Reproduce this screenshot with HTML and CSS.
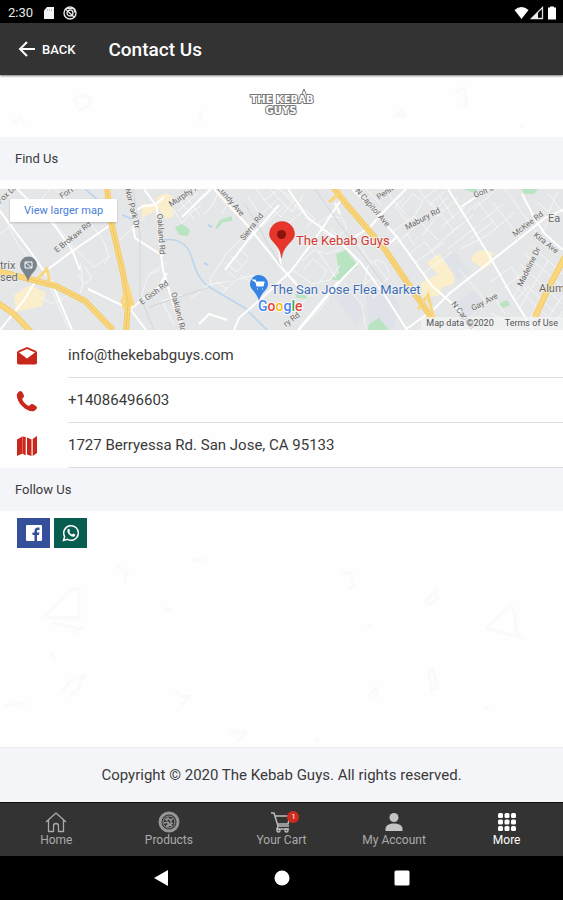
FILE: index.html
```html
<!DOCTYPE html>
<html lang="en">
<head>
  <meta charset="UTF-8">
  <title>Contact Us</title>
  <meta name="viewport" content="width=device-width, initial-scale=1.0">
  <link rel="stylesheet" href="styles.css">
</head>
<body>
  <div class="status-bar">
    <span class="status-time">2:30</span>
    <svg class="status-icon" viewBox="0 0 14 14"><path d="M5 1h7v12H2V4.500z" fill="#f4f4f4"/><path d="M5.500 3v2M7.500 3v2M9.500 3v2" stroke="#999" stroke-width=".6"/></svg>
    <svg class="status-icon" viewBox="0 0 14 14" fill="none" stroke="#e6e6e6"><circle cx="7" cy="7" r="6" stroke-width="1.400"/><circle cx="7" cy="7" r="3" stroke-width="1.300"/><path d="M2.500 3l9 8.500M4 2.500h5.500a3 3 0 0 1 2 4" stroke-width="1.200"/></svg>
    <span class="status-right">
      <svg width="15" height="14" viewBox="0 0 15 14"><path d="M.5 4Q7.500-2 14.500 4L7.500 13z" fill="#fff"/></svg>
      <svg width="14" height="14" viewBox="0 0 14 14"><path d="M1.500 12.500L12.500 1.500v11z" fill="none" stroke="#ddd" stroke-width="1.300"/><path d="M1 13L8 6v7z" fill="#eee"/></svg>
      <svg width="14" height="14" viewBox="0 0 14 14"><path d="M5 1.500h4V.5H5zM3 1.500h8v12H3z" fill="#fff"/></svg>
    </span>
  </div>

  <header class="header">
    <button class="back-btn" type="button">
      <svg width="18" height="18" viewBox="0 0 18 18" fill="none" stroke="#fff" stroke-width="2"><path d="M17 9H2.500M9 2L2 9l7 7"/></svg>
      BACK
    </button>
    <h1 class="header-title">Contact Us</h1>
  </header>

  <main class="content">
    <div class="logo">
      <svg class="doodles" viewBox="0 0 563 62" preserveAspectRatio="xMidYMid slice" aria-hidden="true">
        <path d="M74 24l8-4 9 3-3 8-8 4zM13 48l7-6 4 6M197 41l5-3-2 9M395 41l8-6 2 6zM455 17l9-4 3 16-9 2M520 52l4-3"/>
      </svg>
      <svg class="logo-art" width="70" height="28" viewBox="0 0 70 28" role="img" aria-label="The Kebab Guys">
        <text x="35" y="14">THE KEBAB</text>
        <text x="34" y="25">GUYS</text>
        <path d="M55 5l2-5 2 5"/>
      </svg>
    </div>

    <h2 class="section-title">Find Us</h2>

    <div class="map">
      <svg class="map-art" viewBox="0 0 563 141" preserveAspectRatio="xMidYMid slice">
        <rect width="563" height="141" fill="#e5e6e7"/>
        <!-- built-up blocks -->
        <g fill="#fbefcb">
          <path d="M14 106l16-10 16 8-4 13-26 6z"/>
          <path d="M157 8l9-4 7 4v20l-7 2-7-10-17 9v-14h14z"/>
          <path d="M428 72l11-7 16 22-1 8-12 3-3 9-16 1-2-14 17-9-10-9z"/>
          <path d="M472 67l8-6 13 2-2 12-8 5-12-9z"/>
        </g>
        <g fill="#dfe2e8"><path d="M365 100l22-5 14 24-9 22h-22zM442 66l14-2 14 20-13 7zM455 115l18-14 12 14-18 14zM330 103l18-4 18 24-9 14z"/></g>
        <!-- parks and water -->
        <g fill="#b9e4c2">
          <path d="M175 38l7-3 8 6-2 6-9-1z"/><path d="M215 39l5-8 12-4v5l-9 1-6 7z"/>
          <path d="M336 65l10-4 12 16-19 15-8-2 8-6z"/><path d="M464 0h14l-4 4zM521 0h17l-4 5h-9zM369 135l10-6 10 12h-21z"/>
          <path d="M499 115l8-4 3 5-7 3zM295 105l10 1 4 4-12-1z"/>
        </g>
        <g fill="none" stroke="#b8d5ef" stroke-width="1.500">
          <path d="M163 51c12-2 23 2 28 15 5 18 9 26 20 33l34 20 22 22"/>
          <path d="M85 0l14 12M122 26l10 4" /><path d="M204 74l4 2M208 36l4 2" stroke-width="2"/>
        </g>
        <!-- side streets -->
        <g class="street">
          <path d="M0 45l35-28 15-17M55 0l30 28 18 22 6 17-15 11-23-22M72 55l-22-27M109 67l-5 8M118 52l20-17M80 73l3 21-3 10M84 77l8 12-8 6-7-10M50 97l18 42M70 105l-18 10-18-10M0 20l18 36 18 22"/>
          <path d="M140 110l9-25 18-12M150 85l10-4M135 35l10-6M173 20l9 14 10-12 9-5M180 12l14 18M186 8l14 18M178 22l20-18M197 12l7-8M220 0l-8 17-8 8M232 8l-10 16M182 106l-20 6 12 24M190 110l18-14 22-4"/>
          <path d="M212 98l-2-8 17-26 14-14M222 104l14-13 18-5M216 93l11 7M226 74l11 9 11-13M231 67l12 10M238 59l10 9M229 83l7 6M240 86l14 10"/>
          <path d="M256 0l9 11 14-11M263 10l18 18 14-19M270 0l22 23 11-17M279 0l17 12M248 8l18 26M256 30l22-20M262 38l24-22M287 35l18-14 10 9-10 9M283 4l22 22"/>
          <path d="M318 34l10-7 14 2 5 11-9 8-13-3zM330 40l12 10M302 72l12-11 14 4 12-5M294 82l18 13 18-4 10-15M304 80l9-10 14 12-7 10M318 62l18 27M342 53l16 2 14 20"/>
          <path d="M368 77l8-6 9 3 5 12-8 9-10-6-8 7zM374 73l14 18M301 115l16-14M312 130l17-20M344 94l18 22 4 24M372 109l10-7"/>
          <path d="M366 0l16 17M384 0l20 24M405 8l-10 10 15 17M401 18l12-13 10 7-8 14M394 42l20-15 24 24M422 47l21-28M430 63l28-26M409 65l16-12 15 21M414 74l30-20M424 84l28-21M396 55l20-18M418 0l17 21 13-13M423 10l14-10M429 16l16-14M438 27l20-18M441 38l24-20M449 46l24-20M415 57l-8-12M448 60l28-22M439 6l15 24M432 14l22 28"/>
          <path d="M460 30l18-17 20 26M474 20l20-17M480 33l23-18M489 45l25-21M493 14l27 34M505 0l31 43M470 50l24-18M459 80l25 30M490 93l22-15 16 27M504 99l20-16M515 112l14-15M475 118l18-12 12 19M446 130l20 11M491 124l18 10"/>
          <path d="M524 64l39 34M532 57l31 28M520 75l42 40M517 87l38 37M518 100l29 27M530 130l27-50M520 118l28-46M512 110l22-38M548 4l15 20M537 52l14-24 12-8M540 141l23-35M551 141l12-19M460 60l30-15M537 13l12 10 8-20"/>
        </g>
        <!-- main roads -->
        <g class="road">
          <path d="M0 22l30 40 22 32 20 47M17 0l38 37 17 24 8 20M0 141l24-30 15-24 32-24 38-26M88 100l42 20 16 21M130 26l13-9 12-1 9-8M144 0l13 18 2 32 4 31 12 40 9 20M133 37l2 12 28 18M130 120l29-22 8-14"/>
          <path d="M214 0l34 37 32 40 18 20M182 28l29-28M234 141l5-12 23-20 29-27 24-32 28-42M225 81l23-30 31-35M281 78l-2-19M288 0l20 29 29 21 24 24 27 37 19 30M299 141l44-52 15-15M352 0l18 17 27 31 35 49 23 20 20 24M298 141l41-49"/>
          <path d="M405 141l29-21 16-16 32-25 32-25 31-25 18-8M448 0l20 32 19 31 25 44 21 34M350 51l20-13 18-20 18-18M461 18l27-18M522 5l13 25 10 15 18 16M382 61l16-14M340 25l-5-11M199 135l10-10 18 6"/>
        </g>
        <g fill="none" stroke="#d2d4d7" stroke-width="1"><path d="M133 0l7 46v61l14 34M245 15l36 62M315 0l26 37 49 66M149 118l58-19"/></g>
        <!-- freeways -->
        <g class="freeway-edge"><path d="M107-2l3 30 13 56 5 30-2 29M-2 82l31 8 27 7 29 15 28 29M-2 114l16 11 17 18M333-2l14 18 37 43 22 33 25 36M565 68l-14 26-16 34"/></g>
        <g class="freeway"><path d="M107-2l3 30 13 56 5 30-2 29M-2 82l31 8 27 7 29 15 28 29M-2 114l16 11 17 18M333-2l14 18 37 43 22 33 25 36M565 68l-14 26-16 34"/></g>
        <g fill="none" stroke="#fad77c" stroke-width="3"><path d="M122 112l6-14 5 17-9 3zM37 90l10-10 3 15M329 13l11-9 6 13M418 120l10-14 6 24"/></g>
        <g fill="none" stroke="#eec565" stroke-width="1"><path d="M107-2l3 30 13 56 5 30-2 29M333-2l14 18 37 43 22 33 25 36M29 90l27 7 29 15 28 29"/></g>

        <g class="street-name">
          <text transform="translate(57 64) rotate(-39)">E Brokaw Rd</text>
          <text transform="translate(125 0) rotate(76)">Nor Park Dr</text>
          <text transform="translate(157 25) rotate(86)">Oakland Rd</text>
          <text transform="translate(171 104) rotate(76)">Oakland Rd</text>
          <text transform="translate(171 18) rotate(-33)">Murphy Ave</text>
          <text transform="translate(217 0) rotate(49)">Lundy Ave</text>
          <text transform="translate(244 52) rotate(-52)">Sierra Rd</text>
          <text transform="translate(142 116) rotate(-37)">E Gish Rd</text>
          <text transform="translate(355 2) rotate(49)">N Capitol Ave</text>
          <text transform="translate(379 11) rotate(-35)">Penitencia</text>
          <text transform="translate(407 41) rotate(-28)">Mabury Rd</text>
          <text transform="translate(475 9) rotate(-24)">Golf Dr</text>
          <text transform="translate(515 48) rotate(-37)">McKee Rd</text>
          <text transform="translate(533 47) rotate(38)">Kira Ave</text>
          <text transform="translate(522 98) rotate(-64)">Madeline Dr</text>
          <text transform="translate(473 122) rotate(-28)">Gay Ave</text>
          <text transform="translate(451 115) rotate(52)">N Capitol</text>
          <text transform="translate(0 15) rotate(-42)">Fox Dr</text>
          <text transform="translate(62 10) rotate(-35)">Fort Ave</text>
          <text transform="translate(286 138) rotate(-37)">ry Rd</text>
        </g>
        <g class="place-name">
          <text x="0" y="80">trix</text>
          <text x="0" y="92">sed</text>
          <text x="548" y="33">Ea</text>
          <text x="539" y="103">Alum</text>
        </g>
        <!-- pins -->
        <path d="M28 93c-2-9-8-11-8-17a8.500 8.500 0 0 1 17 0c0 6-7 8-9 17z" fill="#7b858e"/>
        <path d="M25 73h7v6h-7zM25 73l7 6" fill="none" stroke="#fff"/>
        <path d="M281.500 69c-1-14-12-16-12-24a12.500 12.500 0 0 1 25 0c0 8-11 10-13 24z" fill="#e8352b" stroke="#c92b22" stroke-width=".5"/>
        <circle cx="281.500" cy="45.500" r="4.500" fill="#8c1410"/>
        <path d="M259 112c-2-9-9-11-9-17a9 9 0 0 1 18 0c0 6-7 8-9 17z" fill="#3584e4"/>
        <path d="M253 91h2l1 2h8l-1 4h-6l-1-4zM257 100h1M262 100h1" fill="#fff" stroke="#fff" stroke-width="1.200"/>
        <text class="pin-name pin-red" x="296" y="56">The Kebab Guys</text>
        <text class="pin-name pin-blue" x="271" y="105">The San Jose Flea Market</text>
        <text class="google" x="258" y="122"><tspan fill="#4285f4">G</tspan><tspan fill="#ea4335">o</tspan><tspan fill="#fbbc05">o</tspan><tspan fill="#4285f4">g</tspan><tspan fill="#34a853">l</tspan><tspan fill="#ea4335">e</tspan></text>
      </svg>
      <a class="map-larger" href="#">View larger map</a>
      <div class="map-credits"><span>Map data ©2020</span><a href="#">Terms of Use</a></div>
    </div>

    <ul class="contact-list">
      <li class="contact-item">
        <svg class="contact-icon" viewBox="0 0 22 22"><path d="M1 8c0-1 .5-1.700 1.300-2.200L11 2l8.700 3.800C20.500 6.300 21 7 21 8v9.500a2 2 0 0 1-2 2H3a2 2 0 0 1-2-2z" fill="#c8271b"/><path d="M3 7.500L11 4l8 3.500-8 6z" fill="#fff"/></svg>
        <a class="contact-text" href="mailto:info@thekebabguys.com">info@thekebabguys.com</a>
      </li>
      <li class="contact-item">
        <svg class="contact-icon" viewBox="0 0 22 22"><path d="M1 4C1.500 2.500 3.500 1 4.700 1c1.500.3 3.500 4 3.300 5.500C7.800 7.700 6.200 8 6.300 9.200c.6 2.300 4.200 6 6.500 6.600 1.200.1 1.600-1.500 2.800-1.700 1.400-.1 5 2.100 5.400 3.400.1 1.300-1.700 3.300-3.400 3.700C10.500 22.500-.5 12 1 4z" fill="#c8271b"/></svg>
        <a class="contact-text" href="tel:+14086496603">+14086496603</a>
      </li>
      <li class="contact-item">
        <svg class="contact-icon" viewBox="0 0 22 22" fill="#c8271b"><path d="M1 4.500L6.500 1.500 9.700 2v18.500l-3.200-2L1 21zM11 2.500l4.500 2V21L11 19.500zM16.700 4L21 1v17l-4.300 3z"/><path d="M6.500 2v16" stroke="#e8857c" stroke-width=".7"/></svg>
        <span class="contact-text">1727 Berryessa Rd. San Jose, CA 95133</span>
      </li>
    </ul>

    <h2 class="section-title">Follow Us</h2>

    <div class="social">
      <a class="social-btn facebook" href="#" aria-label="Facebook">
        <svg width="18" height="18" viewBox="0 0 18 18"><rect x="1" y="1" width="16" height="16" rx="1" fill="#fff"/><path d="M9.500 17v-6H7.500V8.500h2V7c0-2.300 1.300-3.500 3.300-3.500h1.700V6h-1.200c-1 0-1.300.4-1.300 1.300v1.200h2.400l-.4 2.500h-2v6z" fill="#34509a"/></svg>
      </a>
      <a class="social-btn whatsapp" href="#" aria-label="WhatsApp">
        <svg width="18" height="18" viewBox="0 0 18 18"><path d="M1.500 16.500l1.100-4A7.300 7.300 0 1 1 5.500 15.400z" fill="none" stroke="#fff" stroke-width="1.500"/><path d="M5.700 5.200c.5-.7 1.400-.7 1.700 0l.6 1.500c.1.500-.7 1-.6 1.400.5 1.100 1.500 2 2.600 2.400.5.100.9-1 1.400-.9l1.700.8c.4.300-.1 1.600-.8 2-2.800 1.500-8.500-4-6.600-7.200z" fill="#fff"/></svg>
      </a>
    </div>

    <div class="filler">
      <svg class="doodles" viewBox="0 0 563 190" preserveAspectRatio="xMidYMid slice" aria-hidden="true">
        <path d="M46 62l26-27 9-2v29zM55 67l28 6-9 4M119 10l4 4 6 4-3 10M194 5h12M165 51l3 4 5-1M341 19l9-2 3 15-6 2M366 70l5-1M424 45l5-4 5-5 2 7-8 6zM485 72l23-23 5 10v16l9 8-20-6-17-4zM53 97l4 7M64 136l8-12 14-4-5 12-9 8M177 134l5 6 8 0-7 9M368 140l7-8 2 6-4 4M427 115l4-3 5 20-6 2zM483 150l3 4M8 150l14-4 7 2M229 174l17 2-8 8M315 181l4 4"/>
      </svg>
    </div>
  </main>

  <footer class="copyright">Copyright © 2020 The Kebab Guys. All rights reserved.</footer>

  <nav class="tabs">
    <a class="tab" href="#">
      <svg width="22" height="22" viewBox="0 0 22 22" fill="none" stroke="#aaa" stroke-width="1.300" stroke-linejoin="round"><path d="M1 11L11 2l10 9M3.500 9v11.500h5V15a2.500 2.500 0 0 1 5 0v5.500h5V9"/></svg>
      Home
    </a>
    <a class="tab" href="#">
      <svg width="22" height="22" viewBox="0 0 22 22" fill="none" stroke="#969696"><circle cx="11" cy="11" r="9" stroke-width="3"/><circle cx="11" cy="11" r="6" stroke-width="1"/><path d="M7 9l3-2 2 2 3-1M6 12l4-1 2 3 3-2M8 15l3-1 3 1M9 7v3M13 9v4M10 12v4" stroke-width="1.400"/></svg>
      Products
    </a>
    <a class="tab" href="#">
      <svg width="22" height="22" viewBox="0 0 22 22" fill="none" stroke="#bbb" stroke-width="1.500"><path d="M1 2h3l4 13h11M5 5h15l-2 8H7M8 15l-1 3h12"/><circle cx="8.500" cy="19.500" r="1.500"/><circle cx="16.500" cy="19.500" r="1.500"/></svg>
      Your Cart
      <span class="badge">1</span>
    </a>
    <a class="tab" href="#">
      <svg width="22" height="22" viewBox="0 0 22 22" fill="#c4c4c4"><circle cx="11" cy="6.500" r="4.500"/><path d="M2.500 20v-2c0-4 4.500-5.500 8.500-5.500s8.500 1.500 8.500 5.500v2z"/></svg>
      My Account
    </a>
    <a class="tab active" href="#">
      <svg width="22" height="22" viewBox="0 0 22 22" fill="#fff"><rect x="2" y="2" width="5" height="5" rx="1.500"/><rect x="8.500" y="2" width="5" height="5" rx="1.500"/><rect x="15" y="2" width="5" height="5" rx="1.500"/><rect x="2" y="8.500" width="5" height="5" rx="1.500"/><rect x="8.500" y="8.500" width="5" height="5" rx="1.500"/><rect x="15" y="8.500" width="5" height="5" rx="1.500"/><rect x="2" y="15" width="5" height="5" rx="1.500"/><rect x="8.500" y="15" width="5" height="5" rx="1.500"/><rect x="15" y="15" width="5" height="5" rx="1.500"/></svg>
      More
    </a>
  </nav>

  <div class="android-nav">
    <button type="button" aria-label="Back"><svg width="18" height="18" viewBox="0 0 18 18"><path d="M1 9l14-8v16z" fill="#fff"/></svg></button>
    <button type="button" aria-label="Home"><svg width="18" height="18" viewBox="0 0 18 18"><circle cx="9" cy="9" r="7.500" fill="#fff"/></svg></button>
    <button type="button" aria-label="Recent apps"><svg width="18" height="18" viewBox="0 0 18 18"><rect x="1.500" y="1.500" width="15" height="15" rx="1.500" fill="#fff"/></svg></button>
  </div>
</body>
</html>
```
FILE: styles.css
```css
* { box-sizing: border-box; }
body {
  margin: 0;
  min-height: 100vh;
  display: flex;
  flex-direction: column;
  font-family: Roboto, "Liberation Sans", sans-serif;
  font-size: 15px;
  color: #3a3a3a;
  background: #fefefe;
}
a { color: inherit; text-decoration: none; }
svg { display: block; flex: none; }
button {
  font-family: inherit;
  border: none;
  background: none;
  color: inherit;
  padding: 0;
  cursor: pointer;
}

/* status bar */
.status-bar {
  display: flex;
  align-items: center;
  gap: 7px;
  height: 23px;
  padding: 2px 4px 0 8px;
  background: #000;
  color: #e8e8e8;
}
.status-time { margin-right: 2px; font-size: 13px; }
.status-icon { width: 14px; height: 14px; }
.status-right {
  margin-left: auto;
  display: flex;
  gap: 1px;
}

/* header */
.header {
  display: flex;
  align-items: center;
  gap: 33px;
  height: 52px;
  padding: 0 18px;
  background: #333;
  color: #fff;
  box-shadow: 0 1px 2px #0008;
  z-index: 1;
}
.back-btn {
  display: flex;
  align-items: center;
  gap: 6px;
  font-size: 13px;
  font-weight: 500;
}
.header-title { margin: 0; font-size: 19px; font-weight: 500; }

.content {
  flex: 1;
  display: flex;
  flex-direction: column;
}
.logo {
  position: relative;
  display: flex;
  justify-content: center;
  padding: 14px 0 20px;
}
.logo-art { overflow: visible; }
.logo-art text {
  font-family: "DejaVu Sans", sans-serif;
  font-size: 10px;
  font-weight: bold;
  text-anchor: middle;
  fill: #fff;
  stroke: #777;
  stroke-width: 2px;
  paint-order: stroke;
}
.logo-art path { fill: none; stroke: #777; }
.doodles {
  position: absolute;
  inset: 0;
  width: 100%;
  height: 100%;
  fill: none;
  stroke: #fafafa;
  stroke-width: 3;
}
.section-title {
  margin: 0;
  padding: 0 15px;
  font-size: 13px;
  font-weight: 400;
  line-height: 43px;
  background: #f4f5f9;
}

/* map */
.map {
  position: relative;
  height: 141px;
  margin-top: 9px;
  overflow: hidden;
}
.map-art { width: 100%; height: 100%; }
.street { fill: none; stroke: #f6f6f7; stroke-width: 1; }
.road { fill: none; stroke: #fff; stroke-width: 2; }
.freeway-edge { fill: none; stroke: #f3ca6a; stroke-width: 6; }
.freeway { fill: none; stroke: #fad77c; stroke-width: 4; }
.street-name { font-size: 8px; fill: #666; stroke: #eee; stroke-width: 1px; paint-order: stroke; }
.place-name { font-size: 11px; fill: #666; stroke: #f2f2f2; stroke-width: 1px; paint-order: stroke; }
.pin-name { font-size: 13px; stroke: #f2f2f2; stroke-width: 2px; paint-order: stroke; }
.pin-red { fill: #d03a33; }
.pin-blue { fill: #3e6fb8; }
.google { font-size: 14px; font-weight: 500; stroke: #fff; stroke-width: 2px; paint-order: stroke; }
.map-larger {
  position: absolute;
  top: 10px;
  left: 10px;
  padding: 0 14px;
  font-size: 11px;
  line-height: 23px;
  color: #4a80d8;
  background: #fff;
  box-shadow: 0 1px 2px #0003;
}
.map-credits {
  position: absolute;
  right: 0;
  bottom: 0;
  display: flex;
  gap: 11px;
  padding: 0 5px;
  font-size: 9px;
  line-height: 13px;
  color: #555;
  background: #f5f5f5a0;
}

/* contacts */
.contact-list { list-style: none; margin: 0; padding: 3px 0 0; }
.contact-item {
  display: flex;
  align-items: center;
  gap: 30px;
  padding-left: 16px;
}
.contact-icon { width: 22px; height: 22px; }
.contact-text {
  flex: 1;
  line-height: 44px;
  border-bottom: 1px solid #dedede;
}
.social {
  display: flex;
  gap: 4px;
  padding: 7px 17px;
}
.social-btn {
  display: flex;
  align-items: center;
  justify-content: center;
  width: 33px;
  height: 30px;
}
.facebook { background: #34509a; }
.whatsapp { background: #075e50; }
.filler { flex: 1; position: relative; }

.copyright {
  padding: 0 16px;
  border-top: 1px solid #ececec;
  line-height: 54px;
  text-align: center;
  background: #f4f5f9;
}

/* tabs */
.tabs {
  display: flex;
  height: 54px;
  border-top: 1px solid #111;
  background: #333;
}
.tab {
  position: relative;
  flex: 1;
  display: flex;
  flex-direction: column;
  align-items: center;
  padding-top: 8px;
  font-size: 12px;
  line-height: 15px;
  color: #aaa;
}
.tab.active { color: #fff; }
.badge {
  position: absolute;
  top: 8px;
  left: calc(50% + 6px);
  width: 12px;
  height: 12px;
  border-radius: 50%;
  font-size: 8px;
  line-height: 12px;
  text-align: center;
  color: #fff;
  background: #cf2a1e;
}

.android-nav {
  display: flex;
  justify-content: center;
  align-items: center;
  gap: 102px;
  height: 44px;
  background: #000;
}
```
